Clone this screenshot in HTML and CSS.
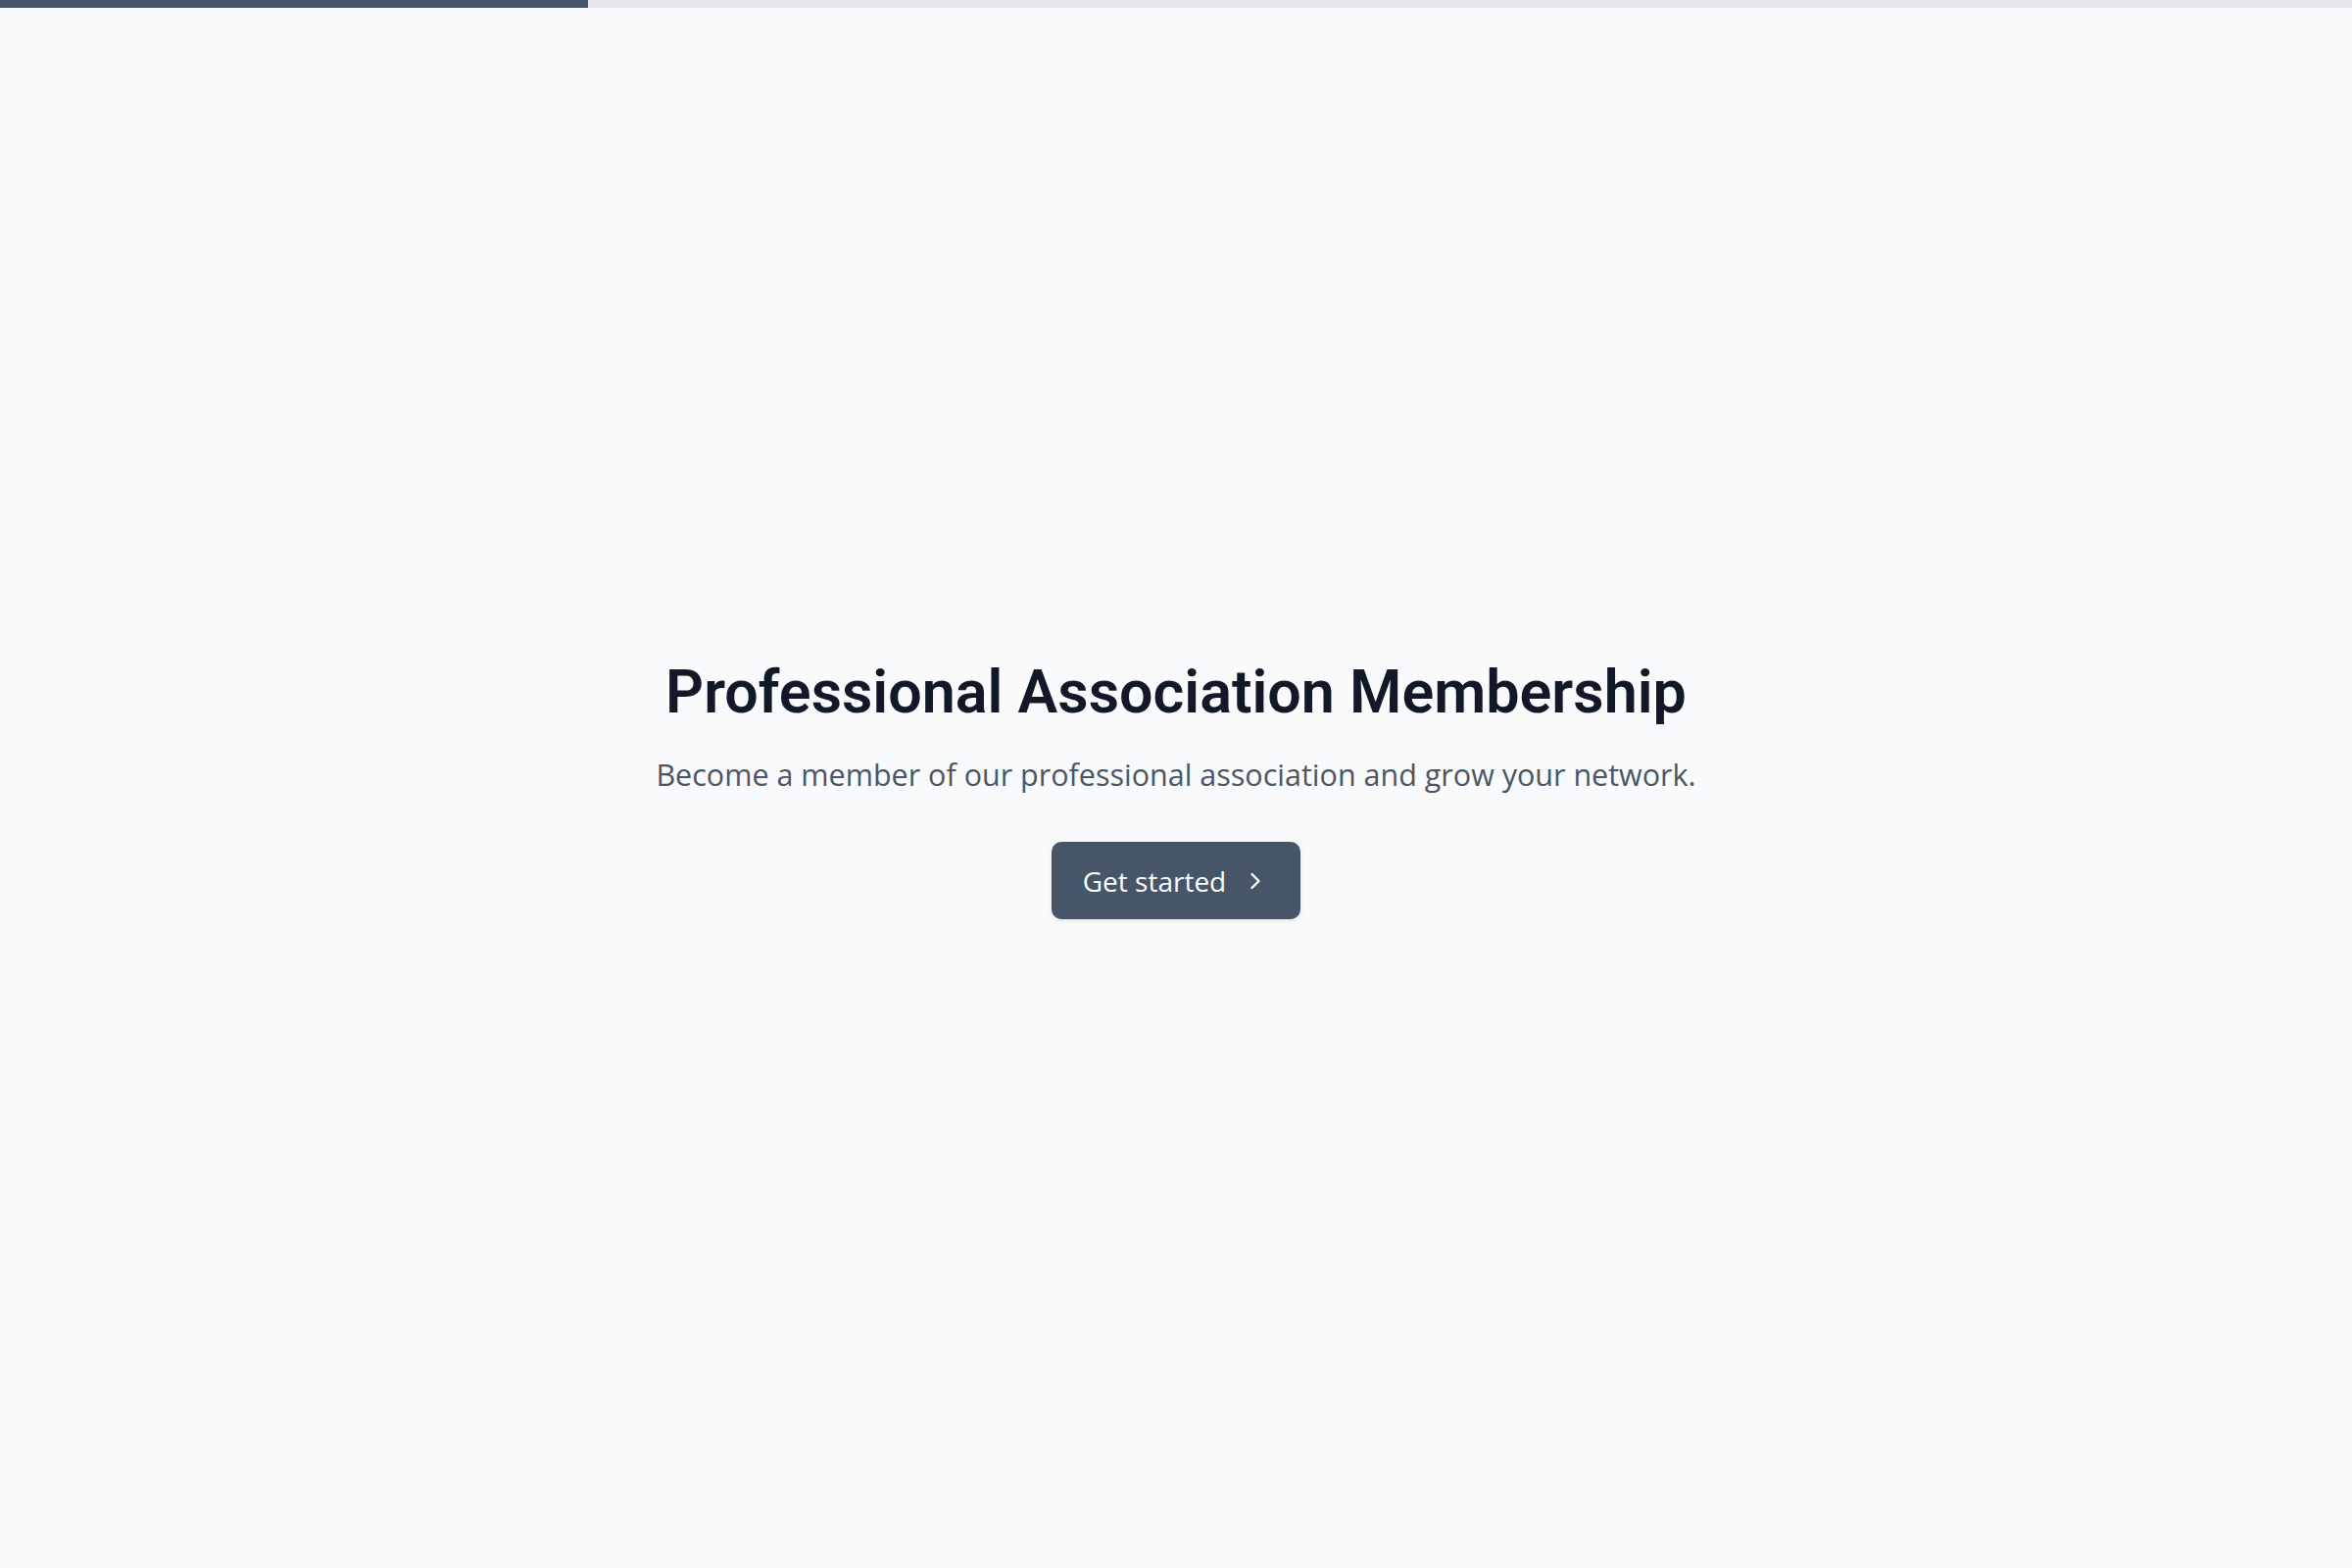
FILE: index.html
```html
<!DOCTYPE html>
<html lang="en">
<head>
  <meta charset="UTF-8">
  <meta name="viewport" content="width=device-width, initial-scale=1.0">
  <title>Professional Association Membership</title>
  <link rel="stylesheet" href="styles.css">
</head>
<body>
  <!-- Progress through the sign-up steps -->
  <div class="progress">
    <div class="progress-fill" style="width: 25%"></div>
  </div>

  <main class="intro">
    <h1>Professional Association Membership</h1>
    <p class="lead">Become a member of our professional association and grow your network.</p>
    <button class="start-btn" type="button">
      Get started
      <svg class="chevron" viewBox="0 0 24 24" width="28" height="28" fill="none" stroke="currentColor" stroke-width="2" stroke-linecap="round" stroke-linejoin="round">
        <path d="m9 18 6-6-6-6"/>
      </svg>
    </button>
  </main>
</body>
</html>
```

FILE: styles.css
```css
body {
  margin: 0;
  font-family: 'Open Sans', 'Noto Sans', sans-serif;
  background: #f8fafc;
  color: #0f172a;
}

.progress {
  height: 8px;
  background: #e5e7eb;
}

.progress-fill {
  height: 100%;
  background: #475569;
}

.intro {
  min-height: calc(100vh - 8px);
  display: flex;
  flex-direction: column;
  align-items: center;
  justify-content: center;
  text-align: center;
}

h1 {
  margin: 0;
  font-family: 'Roboto', 'Open Sans', sans-serif;
  font-size: 61px;
  font-weight: 600;
  line-height: 1.2;
  color: #111827;
}

.lead {
  margin: 26px 0 0;
  font-size: 30.5px;
  line-height: 1.4;
  color: #4b5563;
}

.start-btn {
  margin-top: 48px;
  height: 79px;
  padding: 0 32px;
  display: flex;
  align-items: center;
  gap: 16px;
  border: none;
  border-radius: 10px;
  background: #475569;
  color: #fff;
  font-family: inherit;
  font-size: 28px;
  box-shadow: 0 2px 6px rgba(15, 23, 42, 0.08);
  cursor: pointer;
}

.chevron {
  display: block;
}
```
